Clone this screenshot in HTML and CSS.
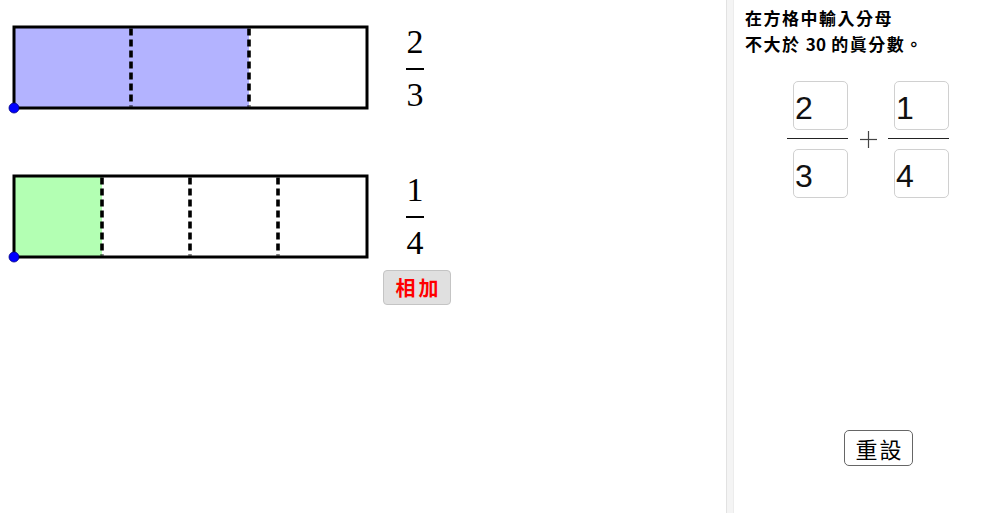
FILE: index.html
```html
<!DOCTYPE html>
<html lang="zh-Hant">
<head>
<meta charset="utf-8">
<title>分數相加</title>
<link rel="stylesheet" href="styles.css">
</head>
<body>
<div class="app">
  <div class="canvas">
    <svg class="shapes" width="726" height="513" viewBox="0 0 726 513">
      <rect x="14" y="27" width="235" height="81" fill="#b3b3ff"/>
      <rect x="14" y="27" width="353" height="81" fill="none" stroke="#000" stroke-width="3"/>
      <line x1="131" y1="28.5" x2="131" y2="106.5" stroke="#000" stroke-width="3.6" stroke-dasharray="7 4"/>
      <line x1="249" y1="28.5" x2="249" y2="106.5" stroke="#000" stroke-width="3.6" stroke-dasharray="7 4"/>
      <circle cx="14" cy="108" r="5" fill="#0000ff" stroke="#000080" stroke-width="0.8"/>

      <rect x="14" y="176" width="88" height="81" fill="#b3ffb3"/>
      <rect x="14" y="176" width="353" height="81" fill="none" stroke="#000" stroke-width="3"/>
      <line x1="102" y1="177.5" x2="102" y2="255.5" stroke="#000" stroke-width="3.6" stroke-dasharray="7 4"/>
      <line x1="190" y1="177.5" x2="190" y2="255.5" stroke="#000" stroke-width="3.6" stroke-dasharray="7 4"/>
      <line x1="278" y1="177.5" x2="278" y2="255.5" stroke="#000" stroke-width="3.6" stroke-dasharray="7 4"/>
      <circle cx="14" cy="257" r="5" fill="#0000ff" stroke="#000080" stroke-width="0.8"/>
    </svg>
    <div class="frac frac-a">
      <span class="frac-num">2</span>
      <span class="frac-bar"></span>
      <span class="frac-den">3</span>
    </div>
    <div class="frac frac-b">
      <span class="frac-num">1</span>
      <span class="frac-bar"></span>
      <span class="frac-den">4</span>
    </div>
    <button class="add-btn">相加</button>
  </div>
  <div class="divider"></div>
  <div class="panel">
    <p class="instr">在方格中輸入分母<br>不大於 <span class="num">30</span> 的眞分數。</p>
    <div class="sum">
      <div class="input-frac">
        <div class="box">2</div>
        <div class="input-bar"></div>
        <div class="box">3</div>
      </div>
      <svg class="plus" width="17" height="17" viewBox="0 0 17 17">
        <line x1="0" y1="8.5" x2="17" y2="8.5" stroke="#444" stroke-width="1.2"/>
        <line x1="8.5" y1="0" x2="8.5" y2="17" stroke="#444" stroke-width="1.2"/>
      </svg>
      <div class="input-frac">
        <div class="box">1</div>
        <div class="input-bar"></div>
        <div class="box">4</div>
      </div>
    </div>
    <button class="reset-btn">重設</button>
  </div>
</div>
</body>
</html>
```

FILE: styles.css
```css
html, body {
  margin: 0;
  padding: 0;
  background: #fff;
  overflow: hidden;
}

.app {
  display: flex;
  width: 1000px;
  height: 513px;
}

.canvas {
  position: relative;
  width: 726px;
  height: 513px;
  flex: none;
}

.shapes {
  position: absolute;
  left: 0;
  top: 0;
}

.frac {
  position: absolute;
  width: 20px;
  display: flex;
  flex-direction: column;
  align-items: center;
  font-family: "Liberation Serif", "DejaVu Serif", serif;
  font-size: 34px;
  line-height: 34px;
  color: #000;
}

.frac-a {
  left: 405px;
  top: 25px;
}

.frac-b {
  left: 405px;
  top: 173px;
}

.frac-bar {
  display: block;
  width: 18px;
  height: 1.5px;
  background: #000;
  margin: 9px 0 8px;
}

.add-btn {
  position: absolute;
  left: 383px;
  top: 270px;
  width: 68px;
  height: 35px;
  padding: 0 0 0 3px;
  background: #e0e0e0;
  border: 1px solid #c4c4c4;
  border-radius: 4px;
  color: #f00;
  font-family: "Noto Sans CJK TC", sans-serif;
  font-weight: 700;
  font-size: 20px;
  letter-spacing: 3px;
  line-height: 33px;
}

.divider {
  flex: none;
  width: 6px;
  background: #f4f4f4;
  border-left: 1px solid #e2e2e2;
  border-right: 1px solid #ececec;
}

.panel {
  flex: 1;
  display: flex;
  flex-direction: column;
  align-items: flex-start;
}

.instr {
  margin: 0;
  padding: 5px 0 0 11px;
  font-family: "Noto Sans CJK TC", sans-serif;
  font-weight: 700;
  font-size: 17px;
  line-height: 26px;
  letter-spacing: 1.5px;
  color: #000;
}

.instr .num {
  letter-spacing: 0;
}

.sum {
  display: flex;
  align-items: center;
  margin: 24px 0 0 53px;
}

.input-frac {
  display: flex;
  flex-direction: column;
  align-items: flex-end;
  width: 61px;
}

.box {
  box-sizing: border-box;
  width: 55px;
  height: 49px;
  border: 1px solid #d0d0d0;
  border-radius: 5px;
  padding-left: 1px;
  font-family: "Liberation Sans", Arial, sans-serif;
  font-size: 32px;
  line-height: 53px;
  color: #111;
  overflow: hidden;
}

.input-bar {
  width: 61px;
  height: 1px;
  background: #222;
  margin: 8px 0 10px;
}

.plus {
  flex: none;
  margin: 0 11px 0 12px;
}

.reset-btn {
  margin: auto 0 47px 110px;
  width: 69px;
  height: 36px;
  padding: 0 0 0 2px;
  background: #fff;
  border: 1.5px solid #666;
  border-radius: 5px;
  font-family: "Noto Sans CJK TC", sans-serif;
  font-size: 22px;
  letter-spacing: 2px;
  line-height: 32px;
  color: #000;
}
```
